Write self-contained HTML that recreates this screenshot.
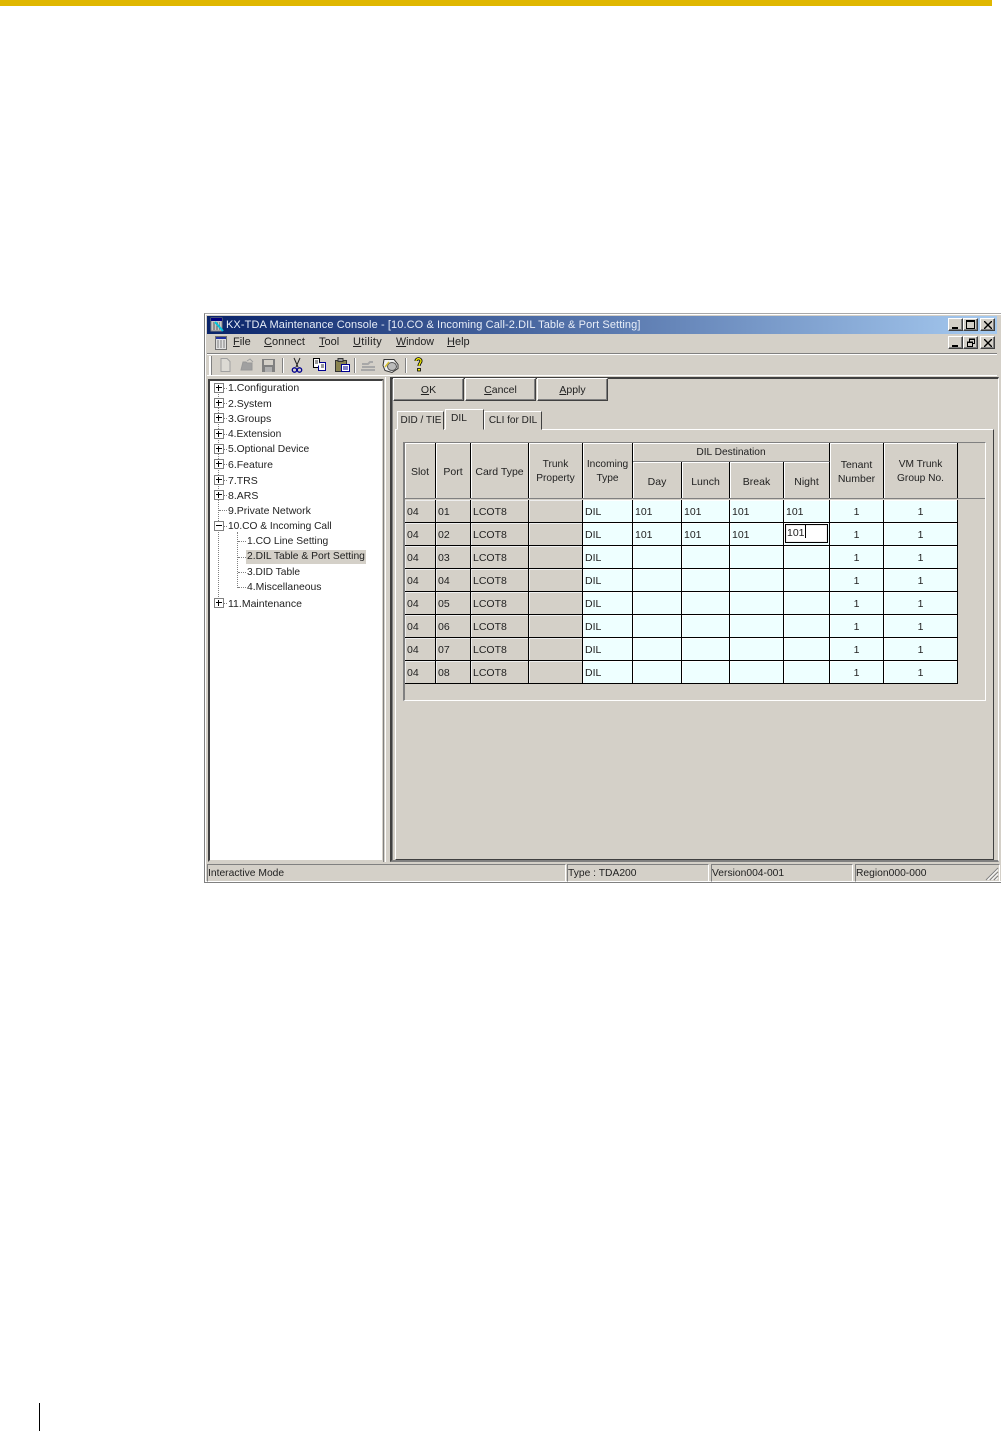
<!DOCTYPE html>
<html><head><meta charset="utf-8"><style>
html,body{margin:0;padding:0;background:#fff;width:1001px;height:1431px;overflow:hidden}
body{position:relative;font-family:"Liberation Sans",sans-serif;font-size:10.5px;color:#222}
div,svg,table{position:absolute}
.t{white-space:nowrap;line-height:14px;height:14px}
.c{text-align:center}
u{text-decoration:underline}
.box{width:8px;height:8px;left:214px;border:1px solid #808080;background:#fff}
.box:before{content:"";position:absolute;left:1px;top:3px;width:6px;height:1px;background:#000;margin:0}
.p:after{content:"";position:absolute;left:3px;top:1px;width:1px;height:6px;background:#000}
.btn{top:378px;height:23px;width:71px;box-sizing:border-box;background:#d4d0c8;border:1px solid;border-color:#fff #404040 #404040 #fff;box-shadow:inset -1px -1px 0 #808080;text-align:center;line-height:23px}
.wb{width:15px;height:13px;box-sizing:border-box;background:#d4d0c8;border:1px solid;border-color:#fff #404040 #404040 #fff;box-shadow:inset -1px -1px 0 #808080}
.h{background:#d4d0c8;border-right:1px solid #000;border-bottom:1px solid #808080;box-shadow:inset 1px 1px 0 #fff;box-sizing:border-box;text-align:center;line-height:14px;display:flex;align-items:center;justify-content:center;padding-top:2px}
.tab{background:#d4d0c8;box-sizing:border-box;border:1px solid;border-color:#fff #404040 transparent #fff;text-align:center;font-size:10.2px}
.s{top:864px;height:18px;box-sizing:border-box;border:1px solid;border-color:#808080 #fff #fff #808080;line-height:18px;white-space:nowrap;font-size:10.3px}
table{border-collapse:separate;border-spacing:0;table-layout:fixed;left:405px;top:500px;width:553px}
td{box-sizing:border-box;height:23px;padding:3px 0 0 2px;border-right:1px solid #000;border-bottom:1px solid #000;background:#d4d0c8;white-space:nowrap;overflow:hidden;line-height:19px;box-shadow:inset 1px 1px 0 #eee}
td.b{background:#eeffff;box-shadow:inset 1px 1px 0 #fff}
td.m{text-align:center;padding:3px 0 0 0}
</style></head><body>
<div style="left:0;top:0;width:992px;height:6px;background:#e0b700"></div>
<div style="left:39px;top:1403px;width:1px;height:28px;background:#000"></div>

<!-- window -->
<div style="left:204px;top:313px;width:797px;height:570px;background:#d4d0c8;box-sizing:border-box;border-top:1px solid #a8a8a8;border-left:1px solid #808080;border-bottom:1px solid #808080;box-shadow:inset 1px 1px 0 #fff,inset 0 -1px 0 #fff"></div>
<div style="left:207px;top:316px;width:790px;height:18px;background:linear-gradient(90deg,#0a246a,#a6caf0)"></div>

<svg style="left:210px;top:317px" width="14" height="15" viewBox="0 0 14 15"><rect x="1" y="1" width="11" height="13" fill="#c8c8c8" stroke="#808080"/><rect x="1" y="1" width="11" height="3" fill="#000080"/><path d="M3 6h7M3 8h7M3 10h7M3 12h7" stroke="#555" stroke-dasharray="2 1"/><path d="M5 5l8 9" stroke="#00c8e0" stroke-width="2"/></svg>
<div class="t" style="left:226px;top:318px;color:#e8eef8;font-size:11px;letter-spacing:.1px">KX-TDA Maintenance Console - [10.CO &amp; Incoming Call-2.DIL Table &amp; Port Setting]</div>

<div class="wb" style="left:948px;top:318px"><div style="left:3px;top:8px;width:6px;height:2px;background:#000"></div></div>
<div class="wb" style="left:963px;top:318px"><div style="left:2px;top:1px;box-sizing:content-box;border:1px solid #000;border-top-width:2px;width:7px;height:6px"></div></div>
<div class="wb" style="left:980px;top:318px"><svg style="left:3px;top:2px" width="8" height="8" viewBox="0 0 8 8"><path d="M0 0l8 8M8 0l-8 8" stroke="#000" stroke-width="1.4"/></svg></div>
<div class="wb" style="left:948px;top:336px"><div style="left:3px;top:8px;width:6px;height:2px;background:#000"></div></div>
<div class="wb" style="left:963px;top:336px"><svg style="left:2px;top:1px" width="10" height="9" viewBox="0 0 10 9"><path d="M3.500 1.500h5v4h-2M1.500 4.500h5v4h-5z M3.500 1.500v2" fill="none" stroke="#000"/><path d="M3 1h6M1 4h6" stroke="#000"/></svg></div>
<div class="wb" style="left:980px;top:336px"><svg style="left:3px;top:2px" width="8" height="8" viewBox="0 0 8 8"><path d="M0 0l8 8M8 0l-8 8" stroke="#000" stroke-width="1.4"/></svg></div>

<!-- menu -->
<svg style="left:214px;top:335px" width="14" height="16" viewBox="0 0 14 16"><rect x="1.500" y="1.500" width="11" height="13" fill="#e0e0e0" stroke="#707070"/><rect x="2" y="2" width="10" height="2" fill="#2030a0"/><path d="M3 6h8M3 8h8M3 10h8M3 12h8" stroke="#808080" stroke-dasharray="2 1"/></svg>
<div class="t" style="left:233px;top:335px;font-size:11px"><u>F</u>ile</div>
<div class="t" style="left:264px;top:335px;font-size:11px"><u>C</u>onnect</div>
<div class="t" style="left:319px;top:335px;font-size:11px"><u>T</u>ool</div>
<div class="t" style="left:353px;top:335px;font-size:11px;letter-spacing:.3px"><u>U</u>tility</div>
<div class="t" style="left:396px;top:335px;font-size:10.7px"><u>W</u>indow</div>
<div class="t" style="left:447px;top:335px;font-size:11px"><u>H</u>elp</div>
<div style="left:207px;top:353px;width:790px;height:1px;background:#808080"></div>
<div style="left:207px;top:354px;width:790px;height:1px;background:#fff"></div>

<!-- toolbar -->
<div style="left:209px;top:356px;width:2px;height:19px;background:#fff;border-right:1px solid #808080"></div>
<svg style="left:218px;top:357px" width="210" height="17" viewBox="0 0 210 17">
<path d="M3 1.500h6l3 3v10h-9z" fill="#dcdad4" stroke="#a0a0a0"/>
<path d="M23 13l2-8h3l1 1h5v7z" fill="#a0a0a0" stroke="#989898"/><path d="M29 4l3-2 3 3" fill="none" stroke="#a0a0a0"/>
<rect x="44" y="2" width="13" height="13" fill="#808080"/><rect x="46" y="3" width="9" height="5" fill="#d4d0c8"/><rect x="47" y="10" width="7" height="5" fill="#b0b0b0"/>
<path d="M64.500 1v15" stroke="#808080"/><path d="M65.500 1v15" stroke="#fff"/>
<path d="M76 1l4 9M82 1l-4 9" stroke="#222" fill="none"/><circle cx="76.500" cy="13" r="2.200" fill="none" stroke="#000090" stroke-width="1.300"/><circle cx="81.500" cy="13" r="2.200" fill="none" stroke="#000090" stroke-width="1.300"/>
<path d="M95.500 1.500h6v9h-6z" fill="#fff" stroke="#000"/><path d="M101.500 5.500h6v8h-7v-5" fill="#fff" stroke="#000090"/><path d="M97 4h3M97 6h3M103 8h3M103 10h3" stroke="#333"/>
<rect x="117.500" y="3.500" width="11" height="11" fill="#8a8450" stroke="#333"/><rect x="120" y="1.500" width="5" height="3" fill="#999" stroke="#333"/><path d="M123.500 7.500h8v7h-8z" fill="#fff" stroke="#000090"/><path d="M125 10h5M125 12h5" stroke="#000090"/>
<path d="M136.500 1v15" stroke="#808080"/><path d="M137.500 1v15" stroke="#fff"/>
<path d="M144 7h6l2-2h3M144 10h13M143 13h14" stroke="#a8a8a8" stroke-width="2" fill="none"/>
<path d="M166 2.500h10l4 5v4l-6 4-7-2-2-5z" fill="#f0f0f0" stroke="#333"/><ellipse cx="174" cy="9.500" rx="4.500" ry="4" fill="#bbb" stroke="#555"/><path d="M167 10l4-5" stroke="#d8c030" stroke-width="1.500"/>
<path d="M187.500 1v15" stroke="#808080"/><path d="M188.500 1v15" stroke="#fff"/>
<path d="M198 4c0-3 5-3 5 0 0 2-2 2-2 5" fill="none" stroke="#000" stroke-width="3"/><path d="M198 4c0-3 5-3 5 0 0 2-2 2-2 5" fill="none" stroke="#f0e800" stroke-width="1.400"/><rect x="199.500" y="11.500" width="3" height="2.500" fill="#f0e800" stroke="#000" stroke-width=".8"/>
</svg>
<div style="left:207px;top:375px;width:790px;height:1px;background:#fff"></div>

<!-- tree -->
<div style="left:208px;top:379px;width:176px;height:483px;box-sizing:border-box;background:#fff;border:2px solid;border-color:#404040 #d4d0c8 #d4d0c8 #404040"></div>
<div style="left:383px;top:379px;width:1px;height:483px;background:#808080"></div>
<div style="left:385px;top:377px;width:1px;height:485px;background:#fff"></div>
<div style="left:218px;top:388px;width:0;height:215px;border-left:1px dotted #808080"></div>
<div style="left:237px;top:532px;width:0;height:56px;border-left:1px dotted #808080"></div>
<div style="left:222px;top:388px;width:5px;border-top:1px dotted #808080"></div>
<div style="left:222px;top:403px;width:5px;border-top:1px dotted #808080"></div>
<div style="left:222px;top:418px;width:5px;border-top:1px dotted #808080"></div>
<div style="left:222px;top:434px;width:5px;border-top:1px dotted #808080"></div>
<div style="left:222px;top:449px;width:5px;border-top:1px dotted #808080"></div>
<div style="left:222px;top:464px;width:5px;border-top:1px dotted #808080"></div>
<div style="left:222px;top:480px;width:5px;border-top:1px dotted #808080"></div>
<div style="left:222px;top:495px;width:5px;border-top:1px dotted #808080"></div>
<div style="left:219px;top:510px;width:8px;border-top:1px dotted #808080"></div>
<div style="left:222px;top:526px;width:5px;border-top:1px dotted #808080"></div>
<div style="left:238px;top:541px;width:8px;border-top:1px dotted #808080"></div>
<div style="left:238px;top:557px;width:8px;border-top:1px dotted #808080"></div>
<div style="left:238px;top:572px;width:8px;border-top:1px dotted #808080"></div>
<div style="left:238px;top:587px;width:8px;border-top:1px dotted #808080"></div>
<div style="left:222px;top:603px;width:5px;border-top:1px dotted #808080"></div>
<div class="box p" style="top:383px"></div>
<div class="box p" style="top:398px"></div>
<div class="box p" style="top:413px"></div>
<div class="box p" style="top:429px"></div>
<div class="box p" style="top:444px"></div>
<div class="box p" style="top:459px"></div>
<div class="box p" style="top:475px"></div>
<div class="box p" style="top:490px"></div>
<div class="box" style="top:521px"></div>
<div class="box p" style="top:598px"></div>
<div style="left:246px;top:550px;width:120px;height:14px;background:#d4d0c8"></div>
<div class="t" style="left:228px;top:381px">1.Configuration</div>
<div class="t" style="left:228px;top:397px">2.System</div>
<div class="t" style="left:228px;top:412px">3.Groups</div>
<div class="t" style="left:228px;top:428px;font-size:10.2px">4.Extension</div>
<div class="t" style="left:228px;top:443px;font-size:10.3px">5.Optional Device</div>
<div class="t" style="left:228px;top:458px">6.Feature</div>
<div class="t" style="left:228px;top:474px">7.TRS</div>
<div class="t" style="left:228px;top:489px">8.ARS</div>
<div class="t" style="left:228px;top:504px">9.Private Network</div>
<div class="t" style="left:228px;top:520px;font-size:10.2px">10.CO &amp; Incoming Call</div>
<div class="t" style="left:247px;top:535px;font-size:10.3px">1.CO Line Setting</div>
<div class="t" style="left:247px;top:550px;font-size:10.3px">2.DIL Table &amp; Port Setting</div>
<div class="t" style="left:247px;top:566px;font-size:10.2px">3.DID Table</div>
<div class="t" style="left:247px;top:581px;font-size:10.4px">4.Miscellaneous</div>
<div class="t" style="left:228px;top:597px">11.Maintenance</div>

<!-- right panel -->
<div style="left:390px;top:377px;width:609px;height:485px;box-sizing:border-box;border-left:2px solid #404040;border-top:2px solid #404040;border-right:1px solid #fff;border-bottom:2px solid #808080;box-shadow:inset 1px 0 0 #808080"></div>
<div class="btn" style="left:393px"><u>O</u>K</div>
<div class="btn" style="left:465px"><u>C</u>ancel</div>
<div class="btn" style="left:537px"><u>A</u>pply</div>

<div style="left:395px;top:429px;width:599px;height:431px;box-sizing:border-box;border:1px solid;border-color:#fff #404040 #404040 #fff"></div>
<div class="tab" style="left:397px;top:411px;width:47px;height:19px;line-height:18px;font-size:10px;padding-left:1px">DID / TIE</div>
<div class="tab" style="left:445px;top:409px;width:39px;height:21px;line-height:17px;border-bottom:1px solid #d4d0c8;text-align:left;padding-left:5px">DIL</div>
<div class="tab" style="left:484px;top:411px;width:58px;height:19px;line-height:18px;font-size:10px">CLI for DIL</div>

<!-- grid -->
<div style="left:403px;top:442px;width:583px;height:259px;box-sizing:border-box;border:1px solid;border-color:#808080 #fff #fff #808080;border-left-width:2px"></div>
<div class="h" style="left:405px;top:443px;width:31px;height:56px">Slot</div>
<div class="h" style="left:436px;top:443px;width:35px;height:56px">Port</div>
<div class="h" style="left:471px;top:443px;width:58px;height:56px">Card Type</div>
<div class="h" style="left:529px;top:443px;width:54px;height:56px;font-size:10.2px">Trunk<br>Property</div>
<div class="h" style="left:583px;top:443px;width:50px;height:56px;font-size:10.2px">Incoming<br>Type</div>
<div class="h" style="left:633px;top:443px;width:197px;height:19px;font-size:10.2px">DIL Destination</div>
<div class="h" style="left:633px;top:462px;width:49px;height:37px;padding-top:4px">Day</div>
<div class="h" style="left:682px;top:462px;width:48px;height:37px;padding-top:4px">Lunch</div>
<div class="h" style="left:730px;top:462px;width:54px;height:37px;padding-top:4px">Break</div>
<div class="h" style="left:784px;top:462px;width:46px;height:37px;padding-top:4px">Night</div>
<div class="h" style="left:830px;top:443px;width:54px;height:56px">Tenant<br>Number</div>
<div class="h" style="left:884px;top:443px;width:74px;height:56px;font-size:10.2px">VM Trunk<br>Group No.</div>
<div style="left:958px;top:443px;width:27px;height:56px;border-bottom:1px solid #808080;box-sizing:border-box"></div>
<div style="left:405px;top:498px;width:580px;height:1px;background:#808080"></div>

<table><colgroup><col style="width:31px"><col style="width:35px"><col style="width:58px"><col style="width:54px"><col style="width:50px"><col style="width:49px"><col style="width:48px"><col style="width:54px"><col style="width:46px"><col style="width:54px"><col style="width:74px"></colgroup>
<tr><td>04</td><td>01</td><td>LCOT8</td><td></td><td class="b">DIL</td><td class="b">101</td><td class="b">101</td><td class="b">101</td><td class="b">101</td><td class="b m">1</td><td class="b m">1</td></tr>
<tr><td>04</td><td>02</td><td>LCOT8</td><td></td><td class="b">DIL</td><td class="b">101</td><td class="b">101</td><td class="b">101</td><td class="b"></td><td class="b m">1</td><td class="b m">1</td></tr>
<tr><td>04</td><td>03</td><td>LCOT8</td><td></td><td class="b">DIL</td><td class="b"></td><td class="b"></td><td class="b"></td><td class="b"></td><td class="b m">1</td><td class="b m">1</td></tr>
<tr><td>04</td><td>04</td><td>LCOT8</td><td></td><td class="b">DIL</td><td class="b"></td><td class="b"></td><td class="b"></td><td class="b"></td><td class="b m">1</td><td class="b m">1</td></tr>
<tr><td>04</td><td>05</td><td>LCOT8</td><td></td><td class="b">DIL</td><td class="b"></td><td class="b"></td><td class="b"></td><td class="b"></td><td class="b m">1</td><td class="b m">1</td></tr>
<tr><td>04</td><td>06</td><td>LCOT8</td><td></td><td class="b">DIL</td><td class="b"></td><td class="b"></td><td class="b"></td><td class="b"></td><td class="b m">1</td><td class="b m">1</td></tr>
<tr><td>04</td><td>07</td><td>LCOT8</td><td></td><td class="b">DIL</td><td class="b"></td><td class="b"></td><td class="b"></td><td class="b"></td><td class="b m">1</td><td class="b m">1</td></tr>
<tr><td>04</td><td>08</td><td>LCOT8</td><td></td><td class="b">DIL</td><td class="b"></td><td class="b"></td><td class="b"></td><td class="b"></td><td class="b m">1</td><td class="b m">1</td></tr>
</table>
<div style="left:785px;top:524px;width:43px;height:19px;box-sizing:border-box;border:1px solid #000;background:#fff;line-height:15px;padding-left:1px;box-shadow:inset 0 0 0 1px #eee">101<span style="display:inline-block;width:1px;height:13px;background:#000;vertical-align:-2px"></span></div>

<!-- status -->
<div class="s" style="left:207px;width:359px">Interactive Mode</div>
<div class="s" style="left:567px;width:142px">Type : TDA200</div>
<div class="s" style="left:711px;width:142px">Version004-001</div>
<div class="s" style="left:855px;width:145px">Region000-000</div>
<svg style="left:985px;top:867px" width="14" height="14" viewBox="0 0 14 14"><path d="M13 1L1 13M13 5L5 13M13 9L9 13" stroke="#808080" fill="none"/><path d="M13 2.500L2.500 13M13 6.500L6.500 13M13 10.500L10.500 13" stroke="#fff" fill="none"/></svg>
</body></html>
